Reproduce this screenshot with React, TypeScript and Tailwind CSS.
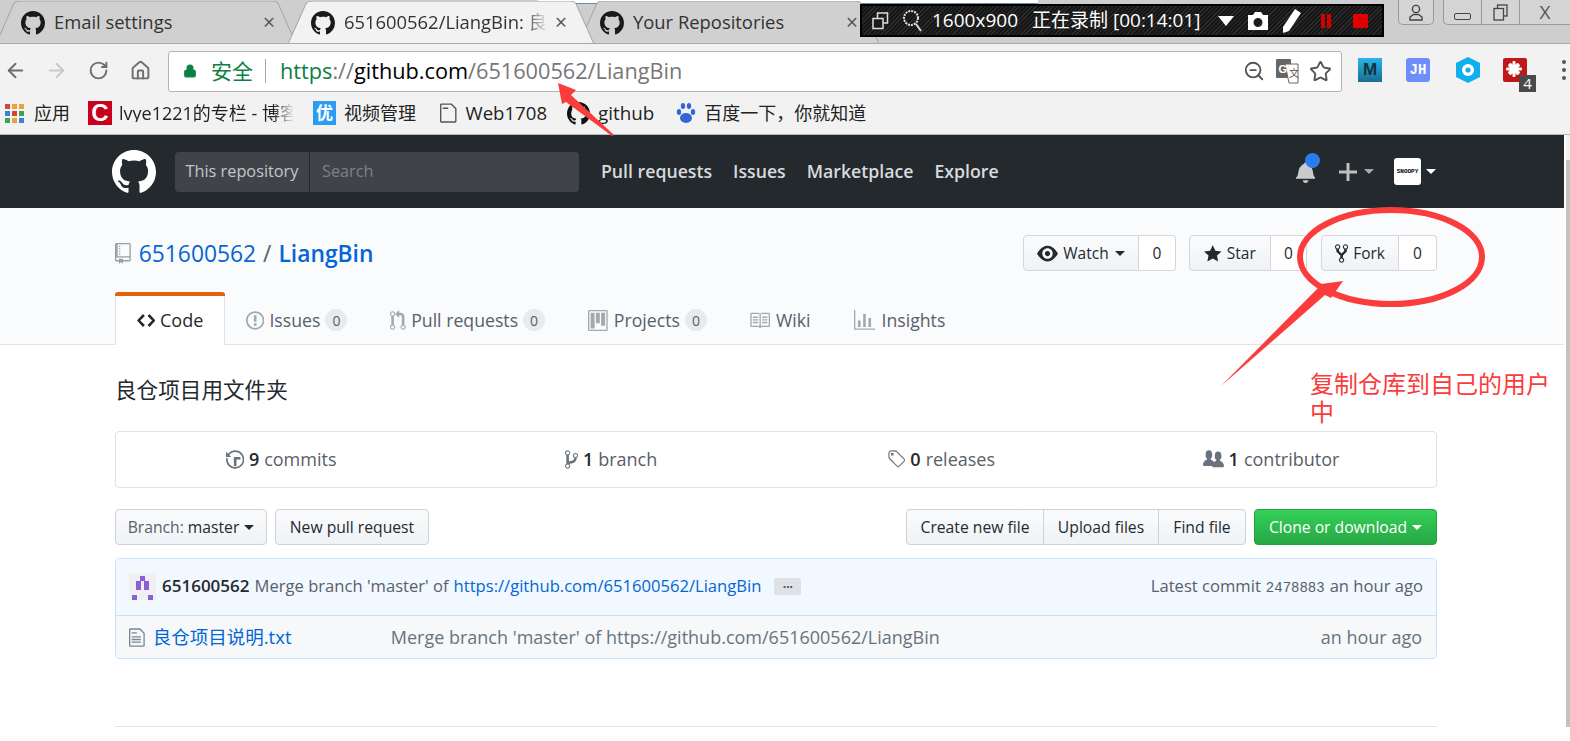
import React from "react";
import { ArrowLeft, ArrowRight, Home, Lock, RotateCw, Star, ZoomOut } from "lucide-react";

// octicons as github drew them back then, the icon packages only carry the newer ones
const icons = {
  mark: { w: 16, d: "M8 0C3.58 0 0 3.58 0 8c0 3.54 2.29 6.53 5.47 7.59.4.07.55-.17.55-.38 0-.19-.01-.82-.01-1.49-2.01.37-2.53-.49-2.69-.94-.09-.23-.48-.94-.82-1.13-.28-.15-.68-.52-.01-.53.63-.01 1.08.58 1.23.82.72 1.21 1.87.87 2.33.66.07-.52.28-.87.51-1.07-1.78-.2-3.64-.89-3.64-3.95 0-.87.31-1.59.82-2.15-.08-.2-.36-1.02.08-2.12 0 0 .67-.21 2.2.82.64-.18 1.32-.27 2-.27.68 0 1.36.09 2 .27 1.53-1.04 2.2-.82 2.2-.82.44 1.1.16 1.92.08 2.12.51.56.82 1.27.82 2.15 0 3.07-1.87 3.75-3.65 3.95.29.25.54.73.54 1.48 0 1.07-.01 1.93-.01 2.2 0 .21.15.46.55.38A8.013 8.013 0 0 0 16 8c0-4.42-3.58-8-8-8z" },
  repo: { w: 12, d: "M4 9H3V8h1v1zm0-3H3v1h1V6zm0-2H3v1h1V4zm0-2H3v1h1V2zm8-1v12c0 .55-.45 1-1 1H6v2l-1.5-1.5L3 16v-2H1c-.55 0-1-.45-1-1V1c0-.55.45-1 1-1h10c.55 0 1 .45 1 1zm-1 10H1v2h2v-1h3v1h5v-2zm0-10H2v9h9V1z" },
  code: { w: 14, d: "M9.5 3L8 4.5 11.5 8 8 11.5 9.5 13 14 8 9.5 3zm-5 0L0 8l4.5 5L6 11.5 2.5 8 6 4.5 4.5 3z" },
  issue: { w: 14, d: "M7 2.3c3.14 0 5.7 2.56 5.7 5.7s-2.56 5.7-5.7 5.7A5.71 5.71 0 0 1 1.3 8c0-3.14 2.56-5.7 5.7-5.7zM7 1C3.14 1 0 4.14 0 8s3.14 7 7 7 7-3.14 7-7-3.14-7-7-7zm1 3H6v5h2V4zm0 6H6v2h2v-2z" },
  pr: { w: 12, d: "M11 11.28V5c-.03-.78-.34-1.47-.94-2.06C9.46 2.35 8.78 2.03 8 2H7V0L4 3l3 3V4h1c.27.02.48.11.69.31.21.2.3.42.31.69v6.28A1.993 1.993 0 0 0 10 15a1.993 1.993 0 0 0 1-3.72zm-1 2.92c-.66 0-1.2-.55-1.2-1.2 0-.65.55-1.2 1.2-1.2.65 0 1.2.55 1.2 1.2 0 .65-.55 1.2-1.2 1.2zM4 3c0-1.11-.89-2-2-2a1.993 1.993 0 0 0-1 3.72v6.56A1.993 1.993 0 0 0 2 15a1.993 1.993 0 0 0 1-3.72V4.72c.59-.34 1-.98 1-1.72zm-.8 10c0 .66-.55 1.2-1.2 1.2-.65 0-1.2-.55-1.2-1.2 0-.65.55-1.2 1.2-1.2.65 0 1.2.55 1.2 1.2zM2 4.2C1.34 4.2.8 3.65.8 3c0-.65.55-1.2 1.2-1.2.65 0 1.2.55 1.2 1.2 0 .65-.55 1.2-1.2 1.2z" },
  project: { w: 15, d: "M10 12h3V2h-3v10zm-4-2h3V2H6v8zm-4 4h3V2H2v12zm-1 1h13V1H1v14zM14 0H1a1 1 0 0 0-1 1v14a1 1 0 0 0 1 1h13a1 1 0 0 0 1-1V1a1 1 0 0 0-1-1z" },
  book: { w: 16, d: "M3 5h4v1H3V5zm0 3h4V7H3v1zm0 2h4V9H3v1zm11-5h-4v1h4V5zm0 2h-4v1h4V7zm0 2h-4v1h4V9zm2-6v9c0 .55-.45 1-1 1H9.5l-1 1-1-1H2c-.55 0-1-.45-1-1V3c0-.55.45-1 1-1h5.5l1 1 1-1H15c.55 0 1 .45 1 1zm-8 .5L7.5 3H2v9h6V3.5zm7-.5H9.5l-.5.5V12h6V3z" },
  graph: { w: 16, d: "M16 14v1H0V0h1v14h15zM5 13H3V8h2v5zm4 0H7V3h2v10zm4 0h-2V6h2v7z" },
  eye: { w: 16, d: "M8.06 2C3 2 0 8 0 8s3 6 8.06 6C13 14 16 8 16 8s-3-6-7.94-6zM8 12c-2.2 0-4-1.78-4-4 0-2.2 1.8-4 4-4 2.22 0 4 1.8 4 4 0 2.22-1.78 4-4 4zm2-4c0 1.11-.89 2-2 2-1.11 0-2-.89-2-2 0-1.11.89-2 2-2 1.11 0 2 .89 2 2z" },
  star: { w: 14, d: "M14 6l-4.9-.64L7 1 4.9 5.36 0 6l3.6 3.26L2.67 14 7 11.67 11.33 14l-.93-4.74L14 6z" },
  fork: { w: 10, d: "M8 1a1.993 1.993 0 0 0-1 3.72V6L5 8 3 6V4.72A1.993 1.993 0 0 0 2 1a1.993 1.993 0 0 0-1 3.72V6.5l3 3v1.78A1.993 1.993 0 0 0 5 15a1.993 1.993 0 0 0 1-3.72V9.5l3-3V4.72A1.993 1.993 0 0 0 8 1zM2 4.2C1.34 4.2.8 3.65.8 3c0-.65.55-1.2 1.2-1.2.65 0 1.2.55 1.2 1.2 0 .65-.55 1.2-1.2 1.2zm3 10c-.66 0-1.2-.55-1.2-1.2 0-.65.55-1.2 1.2-1.2.65 0 1.2.55 1.2 1.2 0 .65-.55 1.2-1.2 1.2zm3-10c-.66 0-1.2-.55-1.2-1.2 0-.65.55-1.2 1.2-1.2.65 0 1.2.55 1.2 1.2 0 .65-.55 1.2-1.2 1.2z" },
  history: { w: 14, d: "M8 13H6V6h5v2H8v5zM7 1C4.81 1 2.87 2.02 1.59 3.59L0 2v4h4L2.5 4.5C3.55 3.17 5.17 2.3 7 2.3c3.14 0 5.7 2.56 5.7 5.7s-2.56 5.7-5.7 5.7A5.71 5.71 0 0 1 1.3 8c0-.34.03-.67.09-1H.08C.03 7.33 0 7.66 0 8c0 3.86 3.14 7 7 7s7-3.14 7-7-3.14-7-7-7z" },
  branch: { w: 10, d: "M10 5c0-1.11-.89-2-2-2a1.993 1.993 0 0 0-1 3.72v.3c-.02.52-.23.98-.63 1.38-.4.4-.86.61-1.38.63-.83.02-1.48.16-2 .45V4.72a1.993 1.993 0 0 0-1-3.72C.88 1 0 1.89 0 3a2 2 0 0 0 1 1.72v6.56c-.59.35-1 .99-1 1.72 0 1.11.89 2 2 2 1.11 0 2-.89 2-2 0-.53-.2-1-.53-1.36.09-.06.48-.41.59-.47.25-.11.56-.17.94-.17 1.05-.05 1.95-.45 2.75-1.25S8.95 7.77 9 6.73h-.02C9.59 6.37 10 5.73 10 5zM2 1.8c.66 0 1.2.55 1.2 1.2 0 .65-.55 1.2-1.2 1.2C1.35 4.2.8 3.65.8 3c0-.65.55-1.2 1.2-1.2zm0 12.41c-.66 0-1.2-.55-1.2-1.2 0-.65.55-1.2 1.2-1.2.65 0 1.2.55 1.2 1.2 0 .65-.55 1.2-1.2 1.2zm6-8c-.66 0-1.2-.55-1.2-1.2 0-.65.55-1.2 1.2-1.2.65 0 1.2.55 1.2 1.2 0 .65-.55 1.2-1.2 1.2z" },
  tag: { w: 14, d: "M7.73 1.73C7.26 1.26 6.62 1 5.96 1H3.5C2.13 1 1 2.13 1 3.5v2.47c0 .66.27 1.3.73 1.77l6.06 6.06c.39.39 1.02.39 1.41 0l4.59-4.59a.996.996 0 0 0 0-1.41L7.73 1.73zM2.38 7.09c-.31-.3-.47-.7-.47-1.13V3.5c0-.88.72-1.59 1.59-1.59h2.47c.42 0 .83.16 1.13.47l6.14 6.13-4.73 4.73-6.13-6.15zM3.01 3h2v2H3V3h.01z" },
  people: { w: 16, d: "M16 12.999c0 .439-.45 1-1 1H7.995c-.539 0-.994-.447-.995-.999H1c-.54 0-1-.561-1-1 0-2.634 3-4 3-4s.229-.409 0-1c-.841-.621-1.058-.59-1-3 .058-2.419 1.367-3 2.5-3s2.442.58 2.5 3c.058 2.41-.159 2.379-1 3-.229.59 0 1 0 1s1.549.711 2.42 2.088C9.196 9.369 10 8.999 10 8.999s.229-.409 0-1c-.841-.62-1.058-.59-1-3 .058-2.419 1.367-3 2.5-3s2.437.581 2.495 3c.059 2.41-.158 2.38-1 3-.229.59 0 1 0 1s3.005 1.366 3.005 4z" },
  fileText: { w: 12, d: "M6 5H2V4h4v1zM2 8h7V7H2v1zm0 2h7V9H2v1zm0 2h7v-1H2v1zm10-7.5V14c0 .55-.45 1-1 1H1c-.55 0-1-.45-1-1V2c0-.55.45-1 1-1h7.5L12 4.5zM11 5L8 2H1v12h10V5z" },
  file: { w: 12, d: "M6 5H2V4h4v1zM11 5L8 2H1v12h10V5zm1-.5V14c0 .55-.45 1-1 1H1c-.55 0-1-.45-1-1V2c0-.55.45-1 1-1h7.5L12 4.5z" },
  bell: { w: 14, d: "M13.99 11.991v1H0v-1l.73-.58c.769-.769.809-2.547 1.189-4.416.77-3.767 4.077-4.996 4.077-4.996 0-.55.45-1 1-1 .55 0 1 .45 1 1 0 0 3.387 1.229 4.156 4.996.38 1.879.42 3.657 1.19 4.417l.64.579h.008zM6.995 15.99c1.11 0 2-.89 2-2h-4c0 1.11.89 2 2 2z" },
  plus: { w: 12, d: "M12 9H7v5H5V9H0V7h5V2h2v5h5v2z" },
};

const Oct = ({ name, size, className = "" }: { name: keyof typeof icons; size: number; className?: string }) => (
  <svg
    className={`shrink-0 ${className}`}
    width={(icons[name].w / 16) * size}
    height={size}
    viewBox={`0 0 ${icons[name].w} 16`}
    fill="currentColor"
  >
    <path fillRule="evenodd" d={icons[name].d} />
  </svg>
);

const Caret = ({ className = "" }: { className?: string }) => (
  <span
    className={`inline-block w-0 h-0 border-x-[5px] border-x-transparent border-t-[5px] border-t-current ${className}`}
  />
);

const Tab = ({
  title,
  active,
  className,
  iconClass,
}: {
  title: React.ReactNode;
  active?: boolean;
  className: string;
  iconClass: string;
}) => (
  <div className={`relative h-[43px] mt-[1px] flex items-center ${className}`}>
    <svg className="absolute inset-0 w-full h-full" viewBox="0 0 100 43" preserveAspectRatio="none">
      <path
        d="M0 43 L6 2 Q6.5 0 8 0 L92 0 Q93.5 0 94 2 L100 43 Z"
        fill={active ? "#f2f2f2" : "#d0d0d0"}
        stroke="#a3a3a3"
        strokeWidth="1"
        vectorEffect="non-scaling-stroke"
      />
    </svg>
    <Oct name="mark" size={24} className={`relative text-[#1a1a1a] ${iconClass}`} />
    <span className="relative ml-[9px] pb-[2px] text-[18.4px] leading-[24px] text-[#333] whitespace-nowrap">{title}</span>
    <span className="absolute left-[267px] top-[11px] text-[21px] leading-none text-[#555]">×</span>
  </div>
);

const TabStrip = () => (
  <div className="relative h-[44px] bg-[#cecece] border-b border-[#a9a9a9] flex overflow-hidden">
    <Tab title="Email settings" className="w-[300px] -ml-[4px]" iconClass="ml-[25px]" />
    <Tab title="Your Repositories" className="w-[300px] order-3 -ml-[15px]" iconClass="ml-[21px]" />
    <Tab
      active
      title={
        <span className="block w-[204px] overflow-hidden [mask-image:linear-gradient(to_right,black_88%,transparent)]">
          651600562/LiangBin: 良仓项目
        </span>
      }
      className="w-[306px] order-2 z-10 -ml-[8px]"
      iconClass="ml-[23px]"
    />
    <div className="absolute left-[538px] top-0 w-[500px] h-[4px] bg-white border-b border-[#6f86b4] z-0" />
    <div className="absolute left-[860px] top-[4px] w-[524px] h-[33px] z-20 bg-[#1b1b1b] border-2 border-black flex items-center text-white text-[19px] leading-none [background-image:repeating-linear-gradient(135deg,#2c2c2c_0px,#2c2c2c_1px,#161616_1px,#161616_3px)]">
      <svg className="ml-[10px] w-[17px] h-[18px]" viewBox="0 0 17 18" fill="none" stroke="#ddd" strokeWidth="1.5">
        <rect x="5.5" y="1" width="10" height="10" />
        <rect x="1" y="6.5" width="10" height="10" fill="#1b1b1b" />
      </svg>
      <svg className="ml-[13px] w-[20px] h-[24px]" viewBox="0 0 20 24" fill="none" stroke="#ddd" strokeWidth="2">
        <circle cx="9" cy="9" r="7" strokeDasharray="2 1" />
        <path d="M14 15 L19 22" />
      </svg>
      <span className="ml-[10px] whitespace-nowrap">1600x900</span>
      <span className="ml-[14px] whitespace-nowrap">正在录制 [00:14:01]</span>
      <Caret className="ml-[17px] !border-x-[8px] !border-t-[10px] text-white" />
      <svg className="ml-[13px] w-[22px] h-[20px]" viewBox="0 0 22 20" fill="#fff">
        <path d="M1 4 H6 L8 1 H14 L16 4 H21 V19 H1 Z M11 7 A4.5 4.5 0 1 0 11 16 A4.5 4.5 0 1 0 11 7 Z" fillRule="evenodd" />
      </svg>
      <svg className="ml-[13px] w-[20px] h-[26px]" viewBox="0 0 20 26" fill="#fff">
        <path d="M13 1 L19 5 L7 23 L1 25 L1 19 Z" />
      </svg>
      <span className="ml-[19px] flex gap-[2px]">
        <span className="w-[4px] h-[14px] bg-[#d40000]" />
        <span className="w-[4px] h-[14px] bg-[#d40000]" />
      </span>
      <span className="ml-[22px] w-[15px] h-[14px] bg-[#e00000]" />
    </div>
    <div className="absolute left-[1398px] top-0 w-[36px] h-[25px] border border-t-0 border-[#9a9a9a] rounded-b-[5px] bg-[#d4d4d4] flex items-center justify-center">
      <svg className="w-[14px] h-[17px]" viewBox="0 0 14 17" fill="none" stroke="#444" strokeWidth="1.4">
        <circle cx="7" cy="5" r="3.6" />
        <path d="M1 16 V13 L4.5 10.5 H9.5 L13 13 V16 Z" />
      </svg>
    </div>
    <div className="absolute left-[1443px] top-0 w-[127px] h-[25px] border border-t-0 border-r-0 border-[#9a9a9a] rounded-bl-[5px] bg-[#d4d4d4] flex">
      <div className="w-[38px] border-r border-[#9a9a9a] flex items-center justify-center">
        <span className="w-[17px] h-[7px] mt-[8px] border border-[#444] rounded-[2px]" />
      </div>
      <div className="w-[38px] border-r border-[#9a9a9a] flex items-center justify-center">
        <svg className="w-[15px] h-[17px]" viewBox="0 0 15 17" fill="none" stroke="#444" strokeWidth="1.3">
          <rect x="4.5" y="1" width="9.5" height="11" />
          <rect x="1" y="4.5" width="9.5" height="11.5" fill="#d4d4d4" />
        </svg>
      </div>
      <div className="flex-1 flex items-center justify-center text-[19px] leading-none text-[#555]">X</div>
    </div>
  </div>
);

const Toolbar = () => (
  <div className="h-[48px] pt-[4px] bg-[#f2f2f2] flex items-center text-[#6e6e6e]">
    <ArrowLeft className="ml-[4px] w-[23px] h-[23px]" strokeWidth={2} />
    <ArrowRight className="ml-[18px] w-[23px] h-[23px] text-[#c9c9c9]" strokeWidth={2} />
    <RotateCw className="ml-[20px] w-[21px] h-[21px]" strokeWidth={2.2} />
    <Home className="ml-[21px] w-[21px] h-[21px]" strokeWidth={2.2} />
    <div className="ml-[17px] w-[1174px] h-[41px] mt-[2px] bg-white border border-[#b4b4b4] rounded-[3px] flex items-center">
      <Lock className="ml-[14px] w-[14px] h-[16px] text-[#0b8043]" fill="#0b8043" strokeWidth={2} />
      <span className="ml-[14px] text-[21px] leading-none text-[#0b8043]">安全</span>
      <span className="ml-[12px] w-px h-[24px] bg-[#a8a8a8]" />
      <span className="ml-[14px] text-[21.7px] leading-none whitespace-nowrap text-[#777]">
        <span className="text-[#0b8043]">https</span>
        <span>://</span>
        <span className="text-black">github.com</span>
        /651600562/LiangBin
      </span>
      <div className="ml-auto flex items-center">
        <ZoomOut className="w-[22px] h-[22px] text-[#555]" strokeWidth={2} />
        <svg className="ml-[11px] w-[23px] h-[26px]" viewBox="0 0 23 26">
          <rect x="0" y="1" width="15" height="19" rx="1" fill="#666" />
          <path d="M9 6 H22 V25 H13 Z" fill="#fff" stroke="#666" />
          <text x="2.5" y="15" fontSize="11" fontWeight="700" fill="#fff" fontFamily="Liberation Sans">G</text>
          <text x="13" y="19" fontSize="10" fill="#555" fontFamily="Noto Sans CJK SC">文</text>
        </svg>
        <Star className="ml-[10px] mr-[9px] w-[23px] h-[23px] text-[#555]" strokeWidth={2} />
      </div>
    </div>
    <div className="relative flex-1 flex items-center">
      <span className="ml-[16px] w-[24px] h-[24px] bg-[linear-gradient(#29b6ea,#1b6c90)] text-[17px] font-bold leading-[24px] text-center text-[#12303e] [font-family:'Liberation_Sans',sans-serif]">
        M
      </span>
      <span className="ml-[24px] w-[24px] h-[24px] rounded-[3px] bg-[#6f8dfb] text-[14px] font-bold leading-[24px] text-center text-white [font-family:'Liberation_Mono',monospace]">
        JH
      </span>
      <svg className="ml-[26px] w-[24px] h-[26px]" viewBox="0 0 24 26">
        <path d="M12 0 L24 6 V20 L12 26 L0 20 V6 Z" fill="#10b0f0" />
        <circle cx="12" cy="13" r="6" fill="#fff" />
        <circle cx="12" cy="13" r="2.6" fill="#10b0f0" />
      </svg>
      <div className="relative ml-[23px] w-[24px] h-[24px] rounded-[2px] bg-[#c01818]">
        <svg className="absolute left-[2px] top-[2px] w-[18px] h-[18px]" viewBox="0 0 18 18" fill="#fff">
          <rect x="7.5" y="1" width="3" height="16" rx="1" />
          <rect x="1" y="7.5" width="16" height="3" rx="1" />
          <rect x="7" y="2" width="4" height="14" rx="1" transform="rotate(45 9 9)" />
          <rect x="7" y="2" width="4" height="14" rx="1" transform="rotate(-45 9 9)" />
        </svg>
        <span className="absolute left-[16px] top-[17px] w-[17px] h-[17px] bg-[#4a4a4a] text-[15px] leading-[17px] text-center text-white">4</span>
      </div>
      <span className="ml-[35px] flex flex-col gap-[4px]">
        <span className="w-[4px] h-[4px] rounded-full bg-[#555]" />
        <span className="w-[4px] h-[4px] rounded-full bg-[#555]" />
        <span className="w-[4px] h-[4px] rounded-full bg-[#555]" />
      </span>
    </div>
  </div>
);

const appDots = [
  "bg-[#d9432f]",
  "bg-[#e8a33a]",
  "bg-[#e8a33a]",
  "bg-[#3f7fe0]",
  "bg-[#d9432f]",
  "bg-[#3da35a]",
  "bg-[#3da35a]",
  "bg-[#e8a33a]",
  "bg-[#3f7fe0]",
];

const Bookmarks = () => (
  <div className="h-[43px] bg-[#f2f2f2] border-b border-[#b7b7b7] flex items-center text-[18px] leading-none text-[#222] whitespace-nowrap">
    <span className="ml-[5px] grid grid-cols-3 gap-[2px]">
      {appDots.map((c, i) => (
        <span key={i} className={`w-[5px] h-[5px] ${c}`} />
      ))}
    </span>
    <span className="ml-[10px]">应用</span>
    <span className="ml-[18px] w-[24px] h-[24px] bg-[#c8001e] text-white text-[24px] font-bold leading-[24px] text-center [font-family:'Liberation_Sans',sans-serif]">C</span>
    <span className="ml-[7px] w-[175px] overflow-hidden [mask-image:linear-gradient(to_right,black_88%,transparent)]">lvye1221的专栏 - 博客园</span>
    <span className="ml-[19px] w-[23px] h-[24px] bg-[#2b9cf0] text-white text-[17px] font-bold leading-[24px] text-center">优</span>
    <span className="ml-[8px]">视频管理</span>
    <Oct name="file" size={22} className="ml-[24px] text-[#555]" />
    <span className="ml-[9px] text-[18.6px]">Web1708</span>
    <Oct name="mark" size={23} className="ml-[20px] text-[#111]" />
    <span className="ml-[8px] text-[18.8px]">github</span>
    <svg className="ml-[22px] w-[20px] h-[22px]" viewBox="0 0 20 22" fill="#3466d8">
      <ellipse cx="10" cy="16" rx="6" ry="5" />
      <ellipse cx="3" cy="10" rx="2.2" ry="3" />
      <ellipse cx="17" cy="10" rx="2.2" ry="3" />
      <ellipse cx="7" cy="4" rx="2.2" ry="3" />
      <ellipse cx="13" cy="4" rx="2.2" ry="3" />
    </svg>
    <span className="ml-[8px]">百度一下，你就知道</span>
  </div>
);

const GithubHeader = () => (
  <div className="h-[73px] bg-[#24292e] flex items-center text-[#d8dadb]">
    <Oct name="mark" size={44} className="ml-[112px] text-white" />
    <div className="ml-[19px] w-[404px] h-[40px] rounded-[4px] bg-[#404448] flex items-center text-[16.3px]">
      <span className="w-[135px] h-full border-r border-[#24292e] flex items-center justify-center text-[#c4c6c8]">
        This repository
      </span>
      <span className="ml-[12px] text-[#7d8185]">Search</span>
    </div>
    <nav className="ml-[22px] flex gap-[21px] text-[17.7px] font-semibold">
      <span>Pull requests</span>
      <span>Issues</span>
      <span>Marketplace</span>
      <span>Explore</span>
    </nav>
    <div className="ml-auto mr-[128px] flex items-center">
      <div className="relative">
        <Oct name="bell" size={22} className="text-[#c9cacb]" />
        <span className="absolute left-[9px] -top-[8px] w-[15px] h-[15px] rounded-full bg-[#2a7cf0]" />
      </div>
      <Oct name="plus" size={24} className="ml-[24px] text-[#bdbfc0]" />
      <Caret className="ml-[7px] text-[#a7a9aa]" />
      <div className="ml-[20px] w-[27px] h-[27px] rounded-[3px] bg-white flex items-center justify-center text-[6px] font-bold text-black [font-family:'Liberation_Mono',monospace]">
        SNOOPY
      </div>
      <Caret className="ml-[5px] text-white" />
    </div>
  </div>
);

const CountButton = ({
  icon,
  label,
  caret,
  left,
  count,
  className,
}: {
  icon: React.ReactNode;
  label: string;
  caret?: boolean;
  left: string;
  count: string;
  className: string;
}) => (
  <div className={`h-[36px] flex text-[15.5px] font-medium text-[#24292e] ${className}`}>
    <div className={`${left} pt-[1px] flex items-center justify-center gap-[5px] rounded-l-[4px] border border-[#d5d6d8] bg-[linear-gradient(#fafbfc,#eff3f6)]`}>
      {icon}
      {label}
      {caret && <Caret className="ml-[1px]" />}
    </div>
    <div className="flex-1 pt-[1px] flex items-center justify-center rounded-r-[4px] border border-l-0 border-[#d5d6d8] bg-white font-normal">
      {count}
    </div>
  </div>
);

const RepoTab = ({ icon, label, count, className }: { icon: React.ReactNode; label: string; count?: string; className: string }) => (
  <div className={`flex items-center pt-[4px] text-[17.7px] text-[#586069] h-[52px] ${className}`}>
    {icon}
    <span className="ml-[5px]">{label}</span>
    {count && (
      <span className="ml-[5px] w-[22px] h-[22px] rounded-full bg-[#e9eaeb] flex items-center justify-center text-[14px] font-normal">
        {count}
      </span>
    )}
  </div>
);

const PageHead = () => (
  <div className="h-[137px] bg-[#fafbfc] border-b border-[#e1e4e8] pl-[115px]">
    <div className="flex items-center pt-[27px] h-[63px]">
      <Oct name="repo" size={21} className="text-[#9a9fa5]" />
      <span className="ml-[8px] mt-[2px] text-[22.8px] text-[#0366d6]">651600562</span>
      <span className="mx-[7px] mt-[2px] text-[22.8px] text-[#586069]">/</span>
      <span className="mt-[2px] text-[22.8px] font-semibold text-[#0366d6]">LiangBin</span>
      <div className="ml-auto mr-[127px] flex">
        <CountButton
          icon={<Oct name="eye" size={21} />}
          label="Watch"
          caret
          left="w-[116px]"
          count="0"
          className="w-[153px]"
        />
        <CountButton
          icon={<Oct name="star" size={20} />}
          label="Star"
          left="w-[82px]"
          count="0"
          className="ml-[13px] w-[118px]"
        />
        <CountButton
          icon={<Oct name="fork" size={21} />}
          label="Fork"
          left="w-[78px]"
          count="0"
          className="ml-[14px] w-[116px]"
        />
      </div>
    </div>
    <div className="flex items-end mt-[21px]">
      <div className="w-[110px] h-[53px] -mb-px bg-white border border-t-0 border-b-0 border-[#e1e4e8] rounded-t-[3px] flex flex-col">
        <span className="h-[4px] -mx-px bg-[#e36209] rounded-t-[3px]" />
        <span className="flex-1 flex items-center justify-center gap-[5px] text-[18px] text-[#24292e]">
          <Oct name="code" size={21} />
          Code
        </span>
      </div>
      <RepoTab icon={<Oct name="issue" size={21} className="text-[#a3a8ad]" />} label="Issues" count="0" className="ml-[21px]" />
      <RepoTab icon={<Oct name="pr" size={21} className="text-[#a3a8ad]" />} label="Pull requests" count="0" className="ml-[43px]" />
      <RepoTab icon={<Oct name="project" size={21} className="mr-[1px] text-[#a3a8ad]" />} label="Projects" count="0" className="ml-[43px]" />
      <RepoTab icon={<Oct name="book" size={21} className="mr-[1px] text-[#a3a8ad]" />} label="Wiki" className="ml-[42px]" />
      <RepoTab icon={<Oct name="graph" size={21} className="mr-[1px] text-[#a3a8ad]" />} label="Insights" className="ml-[44px]" />
    </div>
  </div>
);

const stats = [
  { icon: "history", n: "9", label: "commits" },
  { icon: "branch", n: "1", label: "branch" },
  { icon: "tag", n: "0", label: "releases" },
  { icon: "people", n: "1", label: "contributor" },
] as const;

const BtnGroupItem = ({ label, className }: { label: string; className: string }) => (
  <span className={`h-full flex items-center justify-center border border-[#cfd1d3] bg-[linear-gradient(#fafbfc,#eff3f6)] ${className}`}>
    {label}
  </span>
);

const RepoBody = () => (
  <div className="ml-[115px] w-[1322px]">
    <h2 className="mt-[30px] h-[30px] flex items-center text-[21.6px] font-normal text-[#24292e]">良仓项目用文件夹</h2>

    <div className="mt-[26px] h-[57px] border border-[#dfe2e5] rounded-[4px] grid grid-cols-4 text-[18px] text-[#586069]">
      {stats.map((s) => (
        <div key={s.label} className="flex items-center justify-center gap-[5px]">
          <Oct name={s.icon} size={21} className="text-[#6a737d]" />
          <b className="font-semibold text-[#24292e]">{s.n}</b>
          {s.label}
        </div>
      ))}
    </div>

    <div className="mt-[21px] h-[36px] flex text-[15.7px] font-medium text-[#24292e]">
      <span className="w-[152px] pt-[1px] flex items-center justify-center gap-[4px] rounded-[4px] border border-[#cfd1d3] bg-[linear-gradient(#fafbfc,#eff3f6)]">
        <span className="font-normal text-[#586069]">Branch:</span> master
        <Caret className="ml-[1px]" />
      </span>
      <span className="ml-[8px] w-[154px] pt-[1px] flex items-center justify-center rounded-[4px] border border-[#cfd1d3] bg-[linear-gradient(#fafbfc,#eff3f6)]">
        New pull request
      </span>
      <div className="ml-auto flex">
        <BtnGroupItem label="Create new file" className="w-[138px] pt-[1px] rounded-l-[4px]" />
        <BtnGroupItem label="Upload files" className="w-[116px] pt-[1px] -ml-px" />
        <BtnGroupItem label="Find file" className="w-[88px] pt-[1px] -ml-px rounded-r-[4px]" />
        <span className="ml-[8px] w-[183px] pt-[1px] flex items-center justify-center gap-[5px] rounded-[4px] border border-[#26a041] bg-[linear-gradient(#34d058,#28a745)] text-white">
          Clone or download
          <Caret />
        </span>
      </div>
    </div>

    <div className="mt-[13px] border border-[#c8e1ff] rounded-[4px] overflow-hidden">
      <div className="h-[57px] pb-[2px] bg-[#f1f8ff] border-b border-[#c8e1ff] flex items-center pl-[13px] pr-[13px] text-[16.6px] text-[#586069]">
        <svg className="w-[27px] h-[27px] bg-[#f0f0f0]" viewBox="0 0 27 27" fill="#8b5fd6">
          <rect x="11" y="3" width="5" height="5" />
          <rect x="7" y="8" width="5" height="9" />
          <rect x="15" y="8" width="5" height="9" />
          <rect x="3" y="22" width="5" height="5" />
          <rect x="19" y="22" width="5" height="5" />
        </svg>
        <b className="ml-[6px] text-[17px] font-semibold text-[#24292e]">651600562</b>
        <span className="ml-[5px]">Merge branch 'master' of</span>
        <span className="ml-[5px] text-[#0366d6]">https://github.com/651600562/LiangBin</span>
        <span className="ml-[13px] w-[27px] h-[17px] rounded-[2px] bg-[#dfe2e5] flex items-center justify-center text-[12px] font-bold leading-none text-[#444d56] pb-[5px]">...</span>
        <span className="ml-auto flex items-baseline gap-[5px]">
          Latest commit
          <span className="text-[14px] [font-family:'Liberation_Mono',monospace]">2478883</span>
          an hour ago
        </span>
      </div>
      <div className="h-[42px] bg-[#f6f8fa] flex items-center pl-[13px] pr-[14px] text-[18px] text-[#6a737d]">
        <Oct name="fileText" size={21} className="text-[#7b8794]" />
        <span className="ml-[8px] w-[238px] text-[18.5px] text-[#0366d6]">良仓项目说明.txt</span>
        <span>Merge branch 'master' of https://github.com/651600562/LiangBin</span>
        <span className="ml-auto">an hour ago</span>
      </div>
    </div>

    <div className="mt-[67px] border-t border-[#e1e4e8]" />
  </div>
);

// red marks drawn on top of the screenshot
const Annotations = () => (
  <div className="absolute inset-0 pointer-events-none z-30">
    <svg className="absolute inset-0 w-full h-full" viewBox="0 0 1570 741" fill="#fb3c3c">
      <ellipse cx="1391" cy="257" rx="91" ry="47" fill="none" stroke="#fb3c3c" strokeWidth="6" />
      <path d="M1343 281 L1331 298 L1325 295 L1221 386 L1318 288 L1314 285 Z" />
      <path d="M558 83 L576 90 L571 95 L614 135 L612 136 L566 102 L562 104 Z" />
    </svg>
    <p className="absolute left-[1310px] top-[370px] w-[250px] text-[24px] leading-[28px] text-[#fb3c3c]">
      复制仓库到自己的用户中
    </p>
  </div>
);

export default function App() {
  return (
    <div className="relative w-[1570px] h-[741px] overflow-hidden bg-white [font-family:'Open_Sans','Noto_Sans_CJK_SC',sans-serif]">
      <TabStrip />
      <Toolbar />
      <Bookmarks />
      <div className="flex">
        <main className="flex-1 min-w-0">
          <GithubHeader />
          <PageHead />
          <RepoBody />
        </main>
        <div className="w-[6px] flex flex-col pl-[2px] bg-white">
          <div className="h-[25px] bg-[#f1f1f1]" />
          <div className="flex-1 bg-[#c2c2c2]" />
        </div>
      </div>
      <Annotations />
    </div>
  );
}
